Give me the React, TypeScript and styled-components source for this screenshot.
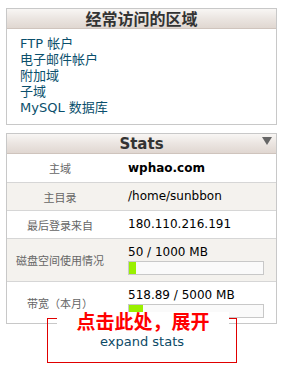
import styled, { createGlobalStyle } from "styled-components";

const GlobalStyle = createGlobalStyle`
  html, body {
    margin: 0;
    background: #fff;
    font-family: "DejaVu Sans", Verdana, "Noto Sans CJK SC", sans-serif;
  }
`;

const Page = styled.div`
  position: relative;
  box-sizing: border-box;
  width: 282px;
  min-height: 370px;
  padding: 8px 5px 0 6px;
`;

const Panel = styled.div`
  border: 1px solid #c8c8c8;
  background: #fff;
  & + & {
    margin-top: 8px;
  }
`;

const PanelHeader = styled.div`
  position: relative;
  height: 19px;
  border-bottom: 1px solid #cfc4bd;
  background: linear-gradient(#f8f6f4, #ebe5e1 50%, #e0d7d1);
  text-align: center;
  font-weight: bold;
  color: #333;
`;

const HeaderTitle = styled.span<{ $cjk?: boolean }>`
  display: inline-block;
  font-size: ${(p) => (p.$cjk ? "16px" : "15px")};
  line-height: 19px;
  font-family: ${(p) =>
    p.$cjk
      ? `"Noto Sans CJK SC", sans-serif`
      : `"DejaVu Sans", Verdana, sans-serif`};
`;

const Toggle = styled.span`
  position: absolute;
  right: 4px;
  top: 3px;
  width: 0;
  height: 0;
  border-left: 5px solid transparent;
  border-right: 5px solid transparent;
  border-top: 8px solid #666;
`;

const LinkList = styled.ul`
  list-style: none;
  margin: 0;
  padding: 7px 0 8px 13px;
`;

const LinkItem = styled.li`
  font-size: 13px;
  line-height: 16px;
  color: #0a4f6c;
  font-family: "DejaVu Sans", Verdana, "Noto Sans CJK SC", sans-serif;
`;

const Row = styled.div<{ $h: number; $alt?: boolean; $last?: boolean }>`
  display: flex;
  align-items: center;
  height: ${(p) => p.$h}px;
  background: ${(p) => (p.$alt ? "#f4f2ee" : "#fff")};
  border-bottom: ${(p) => (p.$last ? "none" : "1px solid #d6d6d6")};
`;

const Label = styled.div`
  width: 106px;
  flex: none;
  text-align: center;
  font-size: 11px;
  color: #666;
  font-family: "Noto Sans CJK SC", sans-serif;
`;

const Value = styled.div<{ $bold?: boolean }>`
  padding-left: 15px;
  font-size: 12px;
  line-height: 15px;
  color: #000;
  font-weight: ${(p) => (p.$bold ? "bold" : "normal")};
`;

const Bar = styled.div`
  width: 134px;
  height: 12px;
  border: 1px solid #c8c8c8;
  background: #fafafa;
  margin-top: 1px;
`;

const Fill = styled.div`
  height: 100%;
  background: #99f000;
`;

const Callout = styled.div`
  position: absolute;
  left: 47px;
  top: 318px;
  width: 190px;
  height: 45px;
  box-sizing: border-box;
  border: 1px solid #e00000;
  padding-top: 15px;
  text-align: center;
  z-index: 2;
`;

const CalloutTitle = styled.div`
  position: absolute;
  top: -7px;
  left: 9px;
  right: 7px;
  height: 18px;
  background: #fff;
  color: #f00;
  font-size: 19px;
  line-height: 18px;
  font-weight: bold;
  font-family: "Noto Sans CJK SC", sans-serif;
`;

const CalloutText = styled.div`
  font-size: 13px;
  line-height: 16px;
  color: #0c4a66;
`;

const links = ["FTP 帐户", "电子邮件帐户", "附加域", "子域", "MySQL 数据库"];

const UsageBar = ({ used, total }: { used: number; total: number }) => (
  <>
    <div>
      {used} / {total} MB
    </div>
    <Bar>
      <Fill style={{ width: `${(used / total) * 100}%` }} />
    </Bar>
  </>
);

export default function App() {
  return (
    <Page>
      <GlobalStyle />
      <Panel>
        <PanelHeader>
          <HeaderTitle $cjk>经常访问的区域</HeaderTitle>
        </PanelHeader>
        <LinkList>
          {links.map((l) => (
            <LinkItem key={l}>{l}</LinkItem>
          ))}
        </LinkList>
      </Panel>
      <Panel>
        <PanelHeader>
          <HeaderTitle>Stats</HeaderTitle>
          <Toggle />
        </PanelHeader>
        <Row $h={28}>
          <Label>主域</Label>
          <Value $bold>wphao.com</Value>
        </Row>
        <Row $h={27} $alt>
          <Label>主目录</Label>
          <Value>/home/sunbbon</Value>
        </Row>
        <Row $h={27}>
          <Label>最后登录来自</Label>
          <Value>180.110.216.191</Value>
        </Row>
        <Row $h={42} $alt>
          <Label>磁盘空间使用情况</Label>
          <Value>
            <UsageBar used={50} total={1000} />
          </Value>
        </Row>
        <Row $h={41} $last>
          <Label>带宽（本月）</Label>
          <Value>
            <UsageBar used={518.89} total={5000} />
          </Value>
        </Row>
      </Panel>
      <Callout>
        <CalloutTitle>点击此处，展开</CalloutTitle>
        <CalloutText>expand stats</CalloutText>
      </Callout>
    </Page>
  );
}
